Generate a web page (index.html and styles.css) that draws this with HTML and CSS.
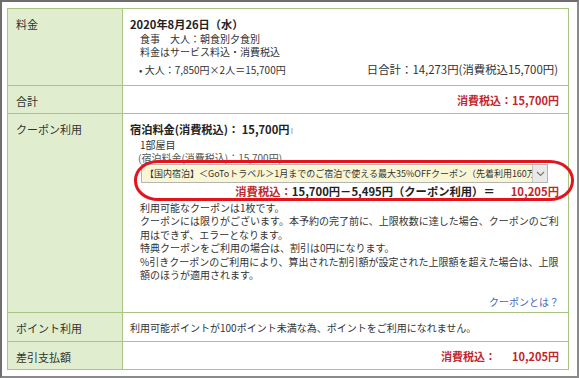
FILE: index.html
```html
<!DOCTYPE html>
<html lang="ja">
<head>
<meta charset="utf-8">
<title>料金詳細</title>
<link rel="stylesheet" href="styles.css">
</head>
<body>
<div class="frame">
  <table class="fee">
    <tr class="r-fee">
      <th>料金</th>
      <td>
        <div class="date">2020年8月26日（水）</div>
        <div class="sub">食事　大人：朝食別夕食別</div>
        <div class="sub">料金はサービス料込・消費税込</div>
        <div class="day-line">
          <span class="item">• 大人：7,850円×2人＝15,700円</span>
          <span class="day-total">日合計：14,273円(消費税込15,700円)</span>
        </div>
      </td>
    </tr>
    <tr class="r-total">
      <th>合計</th>
      <td class="right"><span class="red b">消費税込：15,700円</span></td>
    </tr>
    <tr class="r-coupon">
      <th>クーポン利用</th>
      <td>
        <div class="date">宿泊料金(消費税込)： 15,700円<span class="caret"></span></div>
        <div class="room">1部屋目</div>
        <div class="room-fee">(宿泊料金(消費税込)：15,700円)</div>
        <div class="select">
          <span class="select-text">【国内宿泊】＜GoToトラベル＞1月までのご宿泊で使える最大35%OFFクーポン（先着利用160万枚まで）</span>
          <span class="select-arrow"><svg width="9" height="6" viewBox="0 0 9 6"><path d="M1 1 L4.5 4.5 L8 1" fill="none" stroke="#777" stroke-width="1.2"/></svg></span>
        </div>
        <div class="calc b"><span class="red">消費税込：</span>15,700円－5,495円（クーポン利用）＝<span class="red amount">10,205円</span></div>
        <div class="notes">
          <p>利用可能なクーポンは1枚です。</p>
          <p>クーポンには限りがございます。本予約の完了前に、上限枚数に達した場合、クーポンのご利用はできず、エラーとなります。</p>
          <p>特典クーポンをご利用の場合は、割引は0円になります。</p>
          <p>%引きクーポンのご利用により、算出された割引額が設定された上限額を超えた場合は、上限額のほうが適用されます。</p>
        </div>
        <div class="link-line"><a class="link" href="#">クーポンとは？</a></div>
        <div class="ring"></div>
      </td>
    </tr>
    <tr class="r-point">
      <th>ポイント利用</th>
      <td>利用可能ポイントが100ポイント未満な為、ポイントをご利用になれません。</td>
    </tr>
    <tr class="r-pay">
      <th>差引支払額</th>
      <td class="right"><span class="red b">消費税込：<span class="amount">10,205円</span></span></td>
    </tr>
  </table>
</div>
</body>
</html>
```
FILE: styles.css
```css
* { box-sizing: border-box; }

html, body {
  margin: 0;
  padding: 0;
  background: #fff;
}

body {
  font-family: "Noto Sans CJK JP", "Noto Sans", sans-serif;
  font-size: 10px;
  color: #333;
}

.frame {
  width: 579px;
  height: 378px;
  border: 2px solid #6e6e6e;
  border-right-color: #8a8a8a;
  border-bottom-color: #8a8a8a;
  padding: 6px 0 0 5px;
  overflow: hidden;
}

.fee {
  width: 562px;
  border-collapse: collapse;
  border: 1px solid #aac482;
}

.fee th,
.fee td {
  border: 1px solid #aac482;
  vertical-align: top;
  line-height: 16px;
}

.fee th {
  width: 115px;
  background: #e0edcf;
  font-weight: normal;
  text-align: left;
  padding: 7px 8px 0;
  font-size: 11px;
}

.fee td {
  padding: 7px 9px 0 7px;
}

.r-fee th, .r-fee td { height: 77px; }
.r-total th, .r-total td { height: 28px; }
.r-coupon th, .r-coupon td { height: 199px; }
.r-point th, .r-point td { height: 29px; }
.r-pay th, .r-pay td { height: 28px; }

.r-coupon td { position: relative; }

.right { text-align: right; }
.b { font-weight: bold; }
.red { color: #c0262c; }

.date {
  font-size: 11.2px;
  font-weight: bold;
  line-height: 16px;
  color: #222;
}

.sub {
  margin-left: 10px;
  line-height: 13px;
}

.day-line {
  display: flex;
  justify-content: space-between;
  align-items: baseline;
  margin: 5px 0 0 9px;
  line-height: 13px;
}

.day-total {
  font-size: 11.4px;
  margin-right: 1px;
}

.r-total td,
.r-pay td {
  font-size: 11px;
  padding-top: 6px;
}

.caret {
  display: inline-block;
  width: 2px;
  height: 6px;
  background: #bcd8f0;
  margin-left: 1px;
}

.room {
  margin: 1px 0 0 10px;
  line-height: 13px;
}

.room-fee {
  margin-left: 8px;
  line-height: 13px;
  color: #555;
}

.select {
  display: flex;
  align-items: stretch;
  height: 19px;
  margin: 0 0 0 11px;
  width: 407px;
  border: 1px solid #b4b4b4;
  background: #f9f6d6;
}

.select-text {
  flex: 1;
  overflow: hidden;
  white-space: nowrap;
  padding-left: 3px;
  line-height: 17px;
  font-size: 9px;
  color: #333;
}

.select-arrow {
  width: 15px;
  background: #e9e9e9;
  border-left: 1px solid #c4c4c4;
  display: flex;
  align-items: center;
  justify-content: center;
}

.calc {
  text-align: right;
  font-size: 11.3px;
  line-height: 15px;
  color: #222;
  margin-top: 1px;
}

.amount { margin-left: 16px; }

.notes {
  margin: 2px 0 0 10px;
  line-height: 13.4px;
}

.notes p { margin: 0; }

.link-line {
  text-align: right;
  margin-top: 14px;
  line-height: 14px;
}

.link {
  color: #4a64c4;
  text-decoration: none;
}

.ring {
  position: absolute;
  left: 11px;
  top: 46px;
  width: 440px;
  height: 41px;
  border: 3px solid #e3141c;
  border-radius: 24px / 20px;
  pointer-events: none;
}
```
